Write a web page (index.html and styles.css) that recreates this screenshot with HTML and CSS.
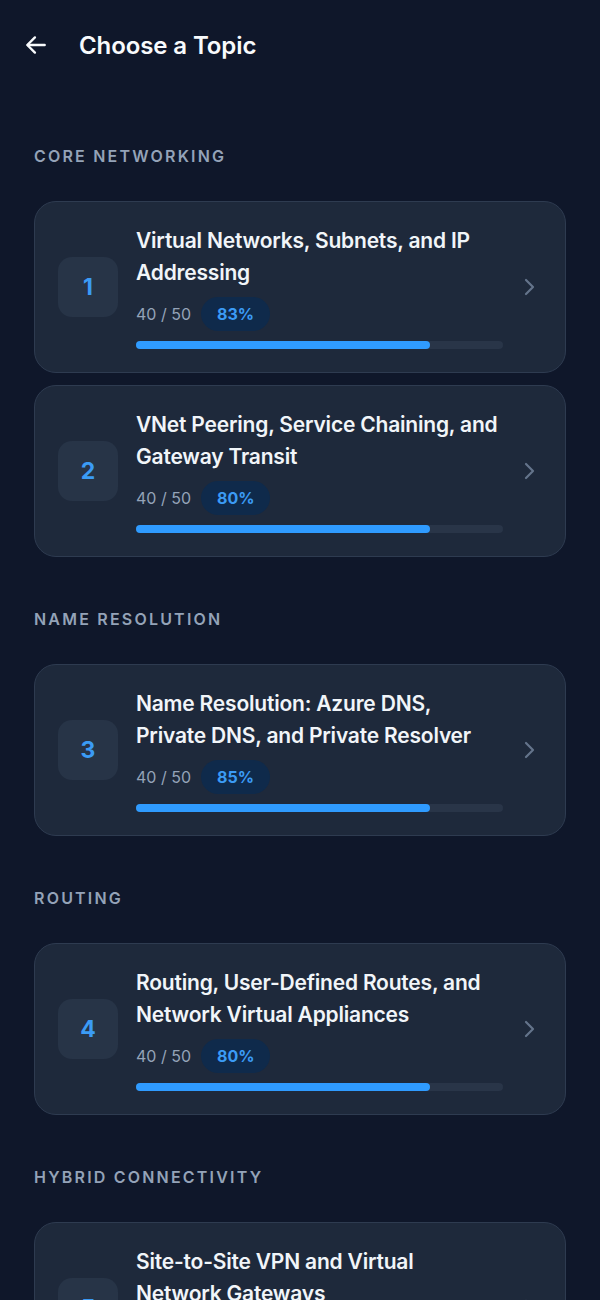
FILE: index.html
```html
<!DOCTYPE html>
<html lang="en">
<head>
  <meta charset="UTF-8">
  <meta name="viewport" content="width=device-width, initial-scale=1.0">
  <title>Choose a Topic</title>
  <link rel="stylesheet" href="styles.css">
</head>
<body>
  <header class="topbar">
    <button class="back" aria-label="Back">
      <svg width="26" height="26" viewBox="0 0 24 24" fill="none" stroke="currentColor" stroke-width="2.2" stroke-linecap="round" stroke-linejoin="round">
        <path d="M20 12H4.5"/>
        <path d="M11 5l-7 7 7 7"/>
      </svg>
    </button>
    <h1>Choose a Topic</h1>
  </header>

  <main class="topics">
    <!-- core networking -->
    <section class="group">
      <h2 class="group-title">Core Networking</h2>
      <div class="card">
        <div class="num">1</div>
        <div class="body">
          <div class="title">Virtual Networks, Subnets, and IP Addressing</div>
          <div class="meta"><span class="count">40 / 50</span><span class="pill">83%</span></div>
          <div class="bar"><div class="fill" style="width: 80%"></div></div>
        </div>
        <svg class="chev" width="12" height="20" viewBox="0 0 12 20" fill="none" stroke="currentColor" stroke-width="2.2" stroke-linecap="round" stroke-linejoin="round"><path d="M3 3l7 7-7 7"/></svg>
      </div>
      <div class="card">
        <div class="num">2</div>
        <div class="body">
          <div class="title">VNet Peering, Service Chaining, and Gateway Transit</div>
          <div class="meta"><span class="count">40 / 50</span><span class="pill">80%</span></div>
          <div class="bar"><div class="fill" style="width: 80%"></div></div>
        </div>
        <svg class="chev" width="12" height="20" viewBox="0 0 12 20" fill="none" stroke="currentColor" stroke-width="2.2" stroke-linecap="round" stroke-linejoin="round"><path d="M3 3l7 7-7 7"/></svg>
      </div>
    </section>

    <!-- name resolution -->
    <section class="group">
      <h2 class="group-title">Name Resolution</h2>
      <div class="card">
        <div class="num">3</div>
        <div class="body">
          <div class="title">Name Resolution: Azure DNS, Private DNS, and Private Resolver</div>
          <div class="meta"><span class="count">40 / 50</span><span class="pill">85%</span></div>
          <div class="bar"><div class="fill" style="width: 80%"></div></div>
        </div>
        <svg class="chev" width="12" height="20" viewBox="0 0 12 20" fill="none" stroke="currentColor" stroke-width="2.2" stroke-linecap="round" stroke-linejoin="round"><path d="M3 3l7 7-7 7"/></svg>
      </div>
    </section>

    <!-- routing -->
    <section class="group">
      <h2 class="group-title">Routing</h2>
      <div class="card">
        <div class="num">4</div>
        <div class="body">
          <div class="title">Routing, User-Defined Routes, and Network Virtual Appliances</div>
          <div class="meta"><span class="count">40 / 50</span><span class="pill">80%</span></div>
          <div class="bar"><div class="fill" style="width: 80%"></div></div>
        </div>
        <svg class="chev" width="12" height="20" viewBox="0 0 12 20" fill="none" stroke="currentColor" stroke-width="2.2" stroke-linecap="round" stroke-linejoin="round"><path d="M3 3l7 7-7 7"/></svg>
      </div>
    </section>

    <!-- hybrid connectivity -->
    <section class="group">
      <h2 class="group-title">Hybrid Connectivity</h2>
      <div class="card">
        <div class="num">5</div>
        <div class="body">
          <div class="title">Site-to-Site VPN and Virtual Network Gateways</div>
          <div class="meta"><span class="count">40 / 50</span><span class="pill">80%</span></div>
          <div class="bar"><div class="fill" style="width: 80%"></div></div>
        </div>
        <svg class="chev" width="12" height="20" viewBox="0 0 12 20" fill="none" stroke="currentColor" stroke-width="2.2" stroke-linecap="round" stroke-linejoin="round"><path d="M3 3l7 7-7 7"/></svg>
      </div>
    </section>
  </main>
</body>
</html>
```

FILE: styles.css
```css
* {
  margin: 0;
  padding: 0;
  box-sizing: border-box;
}
body {
  background-color: #0f172a;
  font-family: Inter, "Noto Sans", sans-serif;
  color: #f1f5f9;
}
.topbar {
  height: 90px;
  display: flex;
  align-items: center;
  padding-left: 23px;
  gap: 30px;
}
.back {
  background: none;
  border: none;
  color: #f8fafc;
  display: flex;
  cursor: pointer;
}
.topbar h1 {
  font-size: 24px;
  font-weight: 600;
  color: #f8fafc;
  letter-spacing: -0.1px;
}
.topics {
  padding: 56px 34px 0;
}
.group {
  margin-bottom: 52px;
}
.group-title {
  font-size: 16px;
  line-height: 20px;
  font-weight: 600;
  text-transform: uppercase;
  letter-spacing: 2.2px;
  color: #94a3b8;
  margin-bottom: 35px;
}
.card {
  display: flex;
  align-items: center;
  background-color: #1e293b;
  border: 1px solid #2e3b50;
  border-radius: 22px;
  padding: 23px 30px 23px 23px;
  margin-bottom: 12px;
}
.num {
  width: 60px;
  height: 60px;
  flex: none;
  border-radius: 14px;
  background-color: #273447;
  color: #3b9bf5;
  font-size: 23px;
  font-weight: 700;
  display: flex;
  align-items: center;
  justify-content: center;
}
.body {
  flex: 1;
  margin-left: 18px;
  margin-right: 20px;
}
.title {
  font-size: 21px;
  line-height: 32px;
  font-weight: 600;
  color: #f1f5f9;
  letter-spacing: -0.2px;
  padding-right: 4px;
}
.meta {
  display: flex;
  align-items: center;
  gap: 10px;
  margin-top: 8px;
}
.count {
  font-size: 16px;
  color: #94a3b8;
}
.pill {
  height: 34px;
  padding: 0 16px;
  border-radius: 17px;
  background-color: #0f2a4b;
  color: #3b9bf5;
  font-size: 16px;
  font-weight: 700;
  display: flex;
  align-items: center;
}
.bar {
  margin-top: 10px;
  height: 8px;
  border-radius: 4px;
  background-color: #293548;
}
.fill {
  height: 100%;
  border-radius: 4px;
  background-color: #2f9bff;
}
.chev {
  flex: none;
  color: #64748b;
}
```
